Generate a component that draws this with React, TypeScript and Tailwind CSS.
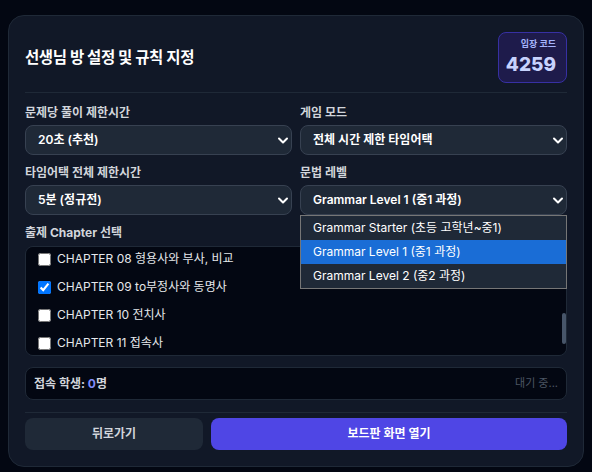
import { useLayoutEffect, useRef, useState } from "react";

const chapters = [
  "CHAPTER 01 문장의 형식",
  "CHAPTER 02 시제",
  "CHAPTER 03 조동사",
  "CHAPTER 04 수동태",
  "CHAPTER 05 명사와 관사",
  "CHAPTER 06 대명사",
  "CHAPTER 07 비인칭 주어",
  "CHAPTER 08 형용사와 부사, 비교",
  "CHAPTER 09 to부정사와 동명사",
  "CHAPTER 10 전치사",
  "CHAPTER 11 접속사",
  "CHAPTER 12 관계사",
];

const levels = [
  "Grammar Starter (초등 고학년~중1)",
  "Grammar Level 1 (중1 과정)",
  "Grammar Level 2 (중2 과정)",
];

function Chevron() {
  return (
    <svg
      viewBox="0 0 12 12"
      className="pointer-events-none absolute right-[3px] top-1/2 h-3 w-3 -translate-y-1/2"
    >
      <path d="M2 4.5 L6 8.5 L10 4.5" fill="none" stroke="#ffffff" strokeWidth="2" strokeLinecap="round" strokeLinejoin="round" />
    </svg>
  );
}

function Field({ label, options, value, children }: { label: string; options: string[]; value: string; children?: React.ReactNode }) {
  return (
    <div className="relative">
      <div className="mb-1 text-xs font-bold leading-4 text-[#d1d5db]">{label}</div>
      <div className="relative">
        <select
          defaultValue={value}
          className="h-[30px] w-full appearance-none rounded-lg border border-[#374151] bg-[#1f2937] pl-3 text-xs font-semibold text-white outline-none"
        >
          {options.map((o) => (
            <option key={o}>{o}</option>
          ))}
        </select>
        <Chevron />
      </div>
      {children}
    </div>
  );
}

export default function App() {
  const [checked, setChecked] = useState<string[]>(["CHAPTER 09 to부정사와 동명사"]);
  const listRef = useRef<HTMLDivElement>(null);
  const startRef = useRef<HTMLLabelElement>(null);

  // 스크롤 위치: CHAPTER 08 부터 보이도록
  useLayoutEffect(() => {
    if (listRef.current && startRef.current) {
      listRef.current.scrollTop = startRef.current.offsetTop + 2;
    }
  }, []);

  const toggle = (c: string) =>
    setChecked((prev) => (prev.includes(c) ? prev.filter((x) => x !== c) : [...prev, c]));

  return (
    <div className="min-h-screen bg-[#030712] pt-[15px] font-['Inter','Noto_Sans_CJK_KR',sans-serif]">
      <div className="mx-auto w-[576px] rounded-2xl border border-[#1f2937] bg-[#111827] p-4">
        {/* 헤더 */}
        <div className="flex items-center justify-between border-b border-[#1f2937] pb-[9px]">
          <h1 className="text-[15.5px] font-bold leading-6 tracking-tight text-white">선생님 방 설정 및 규칙 지정</h1>
          <div className="w-[69px] rounded-lg border border-[#3730a3] bg-[#1e1b4b] pb-[5px] pr-[10px] pt-[5px] text-right">
            <div className="text-[9px] font-bold leading-[12px] text-[#a5b4fc]">입장 코드</div>
            <div className="mt-[3px] text-[19px] font-extrabold leading-6 text-[#c7d2fe]">4259</div>
          </div>
        </div>

        {/* 설정 */}
        <div className="mt-3 grid grid-cols-2 gap-x-2 gap-y-2.5">
          <Field label="문제당 풀이 제한시간" options={["10초", "15초", "20초 (추천)", "30초"]} value="20초 (추천)" />
          <Field label="게임 모드" options={["문제당 제한시간 모드", "전체 시간 제한 타임어택"]} value="전체 시간 제한 타임어택" />
          <Field label="타임어택 전체 제한시간" options={["3분 (연습)", "5분 (정규전)", "10분 (장기전)"]} value="5분 (정규전)" />
          <Field label="문법 레벨" options={levels} value={levels[1]}>
            {/* 열린 드롭다운 */}
            <div className="absolute left-0 right-0 top-full z-10 border border-[#767676] bg-[#1f2937]">
              {levels.map((l, i) => (
                <div
                  key={l}
                  className={`flex h-6 items-center pl-3 text-xs text-white ${i === 1 ? "bg-[#1a6dd6]" : ""}`}
                >
                  {l}
                </div>
              ))}
            </div>
          </Field>
        </div>

        {/* 챕터 선택 */}
        <div className="mt-2.5">
          <div className="mb-[5px] text-xs font-bold leading-4 text-[#d1d5db]">출제 Chapter 선택</div>
          <div className="relative">
            <div
              ref={listRef}
              className="relative h-[110px] overflow-y-auto rounded-lg border border-[#1f2937] bg-[#030712] py-1.5"
            >
              {chapters.map((c) => (
                <label
                  key={c}
                  ref={c.startsWith("CHAPTER 08") ? startRef : undefined}
                  className="flex h-7 cursor-pointer items-center gap-1.5 px-3 text-xs text-[#e5e7eb]"
                >
                  <input
                    type="checkbox"
                    className="h-[13px] w-[13px]"
                    checked={checked.includes(c)}
                    onChange={() => toggle(c)}
                  />
                  {c}
                </label>
              ))}
            </div>
            {/* 스크롤바 */}
            <div className="pointer-events-none absolute right-[1px] top-[67px] h-[31px] w-1 rounded-full bg-[#475569]" />
          </div>
        </div>

        {/* 접속 현황 */}
        <div className="mt-[11px] flex h-[33px] items-center justify-between rounded-lg border border-[#1f2937] bg-[#030712] px-2">
          <span className="text-xs font-bold text-[#d1d5db]">
            접속 학생: <span className="text-[#818cf8]">0</span>명
          </span>
          <span className="text-[11px] text-[#4b5563]">대기 중...</span>
        </div>

        {/* 버튼 */}
        <div className="mt-3 grid grid-cols-[1fr_2fr] gap-2 border-t border-[#1f2937] pt-[5px]">
          <button className="h-8 rounded-lg bg-[#1f2937] text-xs font-bold text-[#d1d5db]">뒤로가기</button>
          <button className="h-8 rounded-lg bg-[#4f46e5] text-xs font-bold text-white">보드판 화면 열기</button>
        </div>
      </div>
    </div>
  );
}
